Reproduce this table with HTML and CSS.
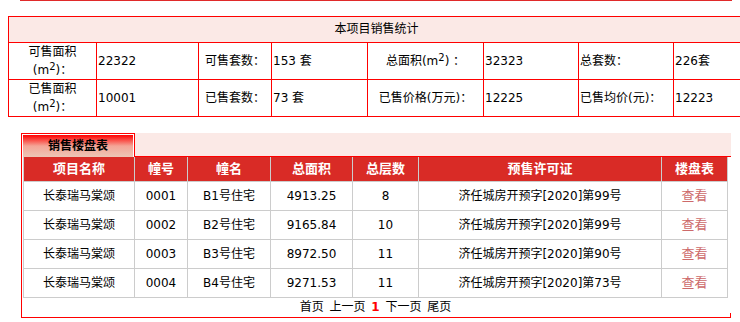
FILE: index.html
```html
<!DOCTYPE html>
<html lang="zh-CN">
<head>
<meta charset="utf-8">
<title>销售统计</title>
<link rel="stylesheet" href="styles.css">
</head>
<body>
<div class="topline"></div>

<div class="stats">
  <div class="stats-title">本项目销售统计</div>

  <div class="cell center"><span>可售面积<br>(m<sup>2</sup>)：</span></div>
  <div class="cell"><span>22322</span></div>
  <div class="cell center"><span>可售套数：</span></div>
  <div class="cell"><span>153 套</span></div>
  <div class="cell center"><span>总面积(m<sup>2</sup>) ：</span></div>
  <div class="cell"><span>32323</span></div>
  <div class="cell"><span>总套数：</span></div>
  <div class="cell"><span>226套</span></div>

  <div class="cell center"><span>已售面积<br>(m<sup>2</sup>)：</span></div>
  <div class="cell"><span>10001</span></div>
  <div class="cell center"><span>已售套数：</span></div>
  <div class="cell"><span>73 套</span></div>
  <div class="cell center"><span>已售价格(万元)：</span></div>
  <div class="cell"><span>12225</span></div>
  <div class="cell"><span>已售均价(元)：</span></div>
  <div class="cell"><span>12223</span></div>
</div>

<div class="panel">
  <div class="tabbar">
    <div class="tab"><span class="tab-inner">销售楼盘表</span></div>
    <div class="tabfill"></div>
  </div>
  <div class="panel-body">
    <div class="list">
      <div class="th">项目名称</div>
      <div class="th">幢号</div>
      <div class="th">幢名</div>
      <div class="th">总面积</div>
      <div class="th">总层数</div>
      <div class="th">预售许可证</div>
      <div class="th">楼盘表</div>

      <div class="td">长泰瑞马棠颂</div>
      <div class="td">0001</div>
      <div class="td">B1号住宅</div>
      <div class="td">4913.25</div>
      <div class="td">8</div>
      <div class="td">济任城房开预字[2020]第99号</div>
      <div class="td"><a class="view" href="#">查看</a></div>

      <div class="td">长泰瑞马棠颂</div>
      <div class="td">0002</div>
      <div class="td">B2号住宅</div>
      <div class="td">9165.84</div>
      <div class="td">10</div>
      <div class="td">济任城房开预字[2020]第99号</div>
      <div class="td"><a class="view" href="#">查看</a></div>

      <div class="td">长泰瑞马棠颂</div>
      <div class="td">0003</div>
      <div class="td">B3号住宅</div>
      <div class="td">8972.50</div>
      <div class="td">11</div>
      <div class="td">济任城房开预字[2020]第90号</div>
      <div class="td"><a class="view" href="#">查看</a></div>

      <div class="td">长泰瑞马棠颂</div>
      <div class="td">0004</div>
      <div class="td">B4号住宅</div>
      <div class="td">9271.53</div>
      <div class="td">11</div>
      <div class="td">济任城房开预字[2020]第73号</div>
      <div class="td"><a class="view" href="#">查看</a></div>
    </div>
    <div class="pager">首页 上一页 <b class="current">1</b> 下一页 尾页</div>
  </div>
</div>
</body>
</html>
```

FILE: styles.css
```css
html, body {
  margin: 0;
  padding: 0;
  overflow: hidden;
  background: #fff;
}

body {
  font-family: "DejaVu Sans", "Noto Sans CJK SC", sans-serif;
  font-size: 12px;
  color: #000;
}

.topline {
  margin-left: 20px;
  width: 712px;
  height: 1px;
  background: #e02a2a;
}

/* sales summary grid: red lines are the 1px gaps */
.stats {
  display: grid;
  width: max-content;
  margin: 15px 0 0 8px;
  padding: 1px;
  gap: 1px;
  background: #f00;
  grid-template-columns: 87px 101px 72px 95px 115px 94px 94px 70px;
  grid-template-rows: 25px 36px 36px;
}

.stats-title {
  grid-column: 1 / -1;
  background: #fbe9e6;
  text-align: center;
  line-height: 25px;
}

.cell {
  background: #fff;
  display: flex;
  align-items: center;
  padding-left: 1px;
  line-height: 18px;
}

.cell.center {
  justify-content: center;
  text-align: center;
  padding-left: 0;
}

sup {
  font-size: 10px;
  line-height: 0;
  vertical-align: 4px;
}

/* tabbed listing panel */
.panel {
  width: 710px;
  margin: 16px 0 0 21px;
}

.tabbar {
  display: flex;
  height: 24px;
}

.tab {
  width: 110px;
  border: 1px solid #f00;
  border-bottom: 0;
  padding: 1px 1px 0;
  background: #fff;
}

.tab-inner {
  display: block;
  height: 22px;
  line-height: 22px;
  text-align: center;
  font-weight: bold;
  background: linear-gradient(to bottom, #ff0000 0%, #f4a597 50%, #ecc6b6 100%);
}

.tabfill {
  flex: 1;
  height: 23px;
  background: #fbe9e6;
  border-bottom: 1px solid #f00;
}

.panel-body {
  position: relative;
  border-left: 1px solid #f00;
  border-bottom: 1px solid #f00;
  padding-left: 1px;
}

.panel-body::after {
  content: "";
  position: absolute;
  right: 0;
  bottom: 0;
  width: 1px;
  height: 4px;
  background: #f00;
}

.list {
  display: grid;
  width: max-content;
  padding: 0 1px 1px;
  gap: 1px;
  background: #ccc;
  grid-template-columns: 110px 52px 82px 81px 65px 242px 65px;
  grid-auto-rows: 28px;
  grid-template-rows: 24px;
}

.th {
  background: #d92b26;
  color: #fff;
  font-size: 13px;
  font-weight: bold;
  text-align: center;
  line-height: 24px;
}

.td {
  background: #fff;
  text-align: center;
  line-height: 28px;
}

.view {
  color: #cd6a6a;
  text-decoration: none;
  font-size: 13px;
}

.pager {
  width: 705px;
  height: 19px;
  line-height: 19px;
  text-align: center;
  word-spacing: 2px;
}

.current {
  color: #f00;
}
```
